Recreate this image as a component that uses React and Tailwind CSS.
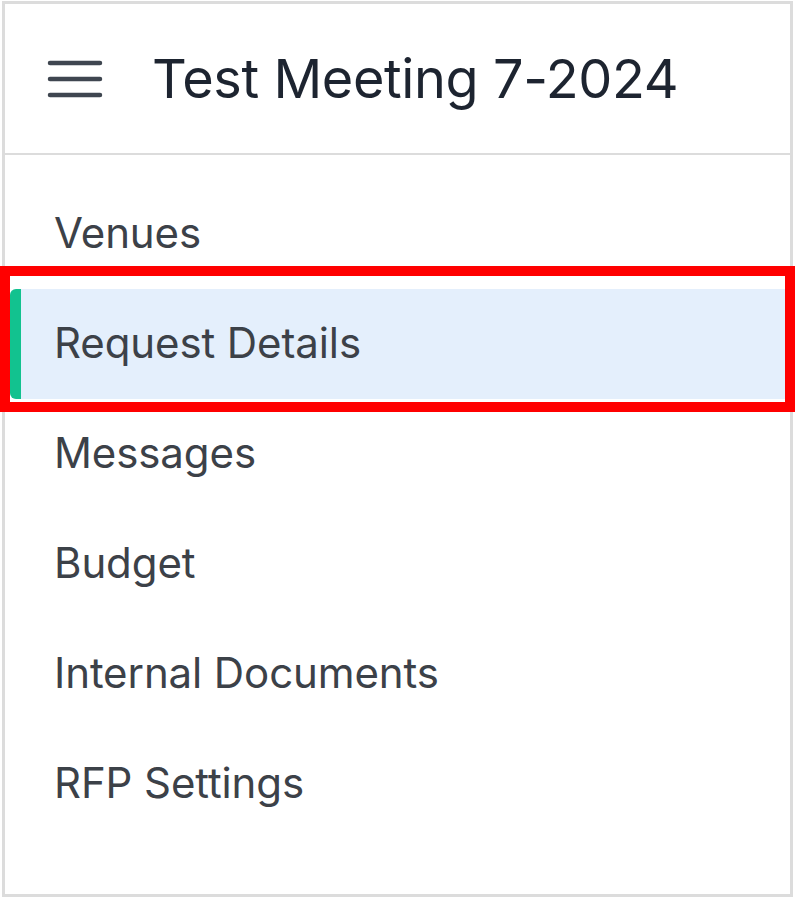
import React from 'react';

const items = ['Venues', 'Request Details', 'Messages', 'Budget', 'Internal Documents', 'RFP Settings'];

const Hamburger = () => (
    <svg width="56" height="40" viewBox="0 0 56 40" className="shrink-0">
        <path d="M3 4h50M3 20h50M3 36h50" stroke="#3f4650" strokeWidth="4.5" strokeLinecap="round" />
    </svg>
);

const App = () => {
    const active = 'Request Details';
    return (
        <div className="relative w-[795px] h-[899px] bg-white pt-[1px] pb-[2px] px-[2px]" style={{ fontFamily: 'Inter, "Noto Sans", sans-serif' }}>
            <div className="h-full border-[3px] border-[#dcdcdc] flex flex-col">
                <div className="h-[151px] flex items-center pl-[42px] border-b-2 border-[#dcdcdc] shrink-0">
                    <Hamburger />
                    <h1 className="ml-[49px] text-[54px] text-[#1d2430] leading-none tracking-[-0.4px]">Test Meeting 7-2024</h1>
                </div>
                <ul className="pt-[24px] px-[5px]">
                    {items.map((item) => (
                        <li
                            key={item}
                            className={`h-[110px] flex items-center text-[42px] text-[#3c4148] tracking-[-0.1px] ${item === active ? 'bg-[#e4effc] rounded-l-[6px]' : ''}`}
                        >
                            <span className={`w-[11px] h-full rounded-l-[6px] ${item === active ? 'bg-[#12c28f]' : ''}`}></span>
                            <span className="pl-[33px] pb-[2px] leading-none">{item}</span>
                        </li>
                    ))}
                </ul>
            </div>
            {/* highlight annotation */}
            <div className="absolute left-0 top-[266px] w-[795px] h-[146px] border-[10px] border-[#ff0000] pointer-events-none"></div>
        </div>
    );
};

export default App;
